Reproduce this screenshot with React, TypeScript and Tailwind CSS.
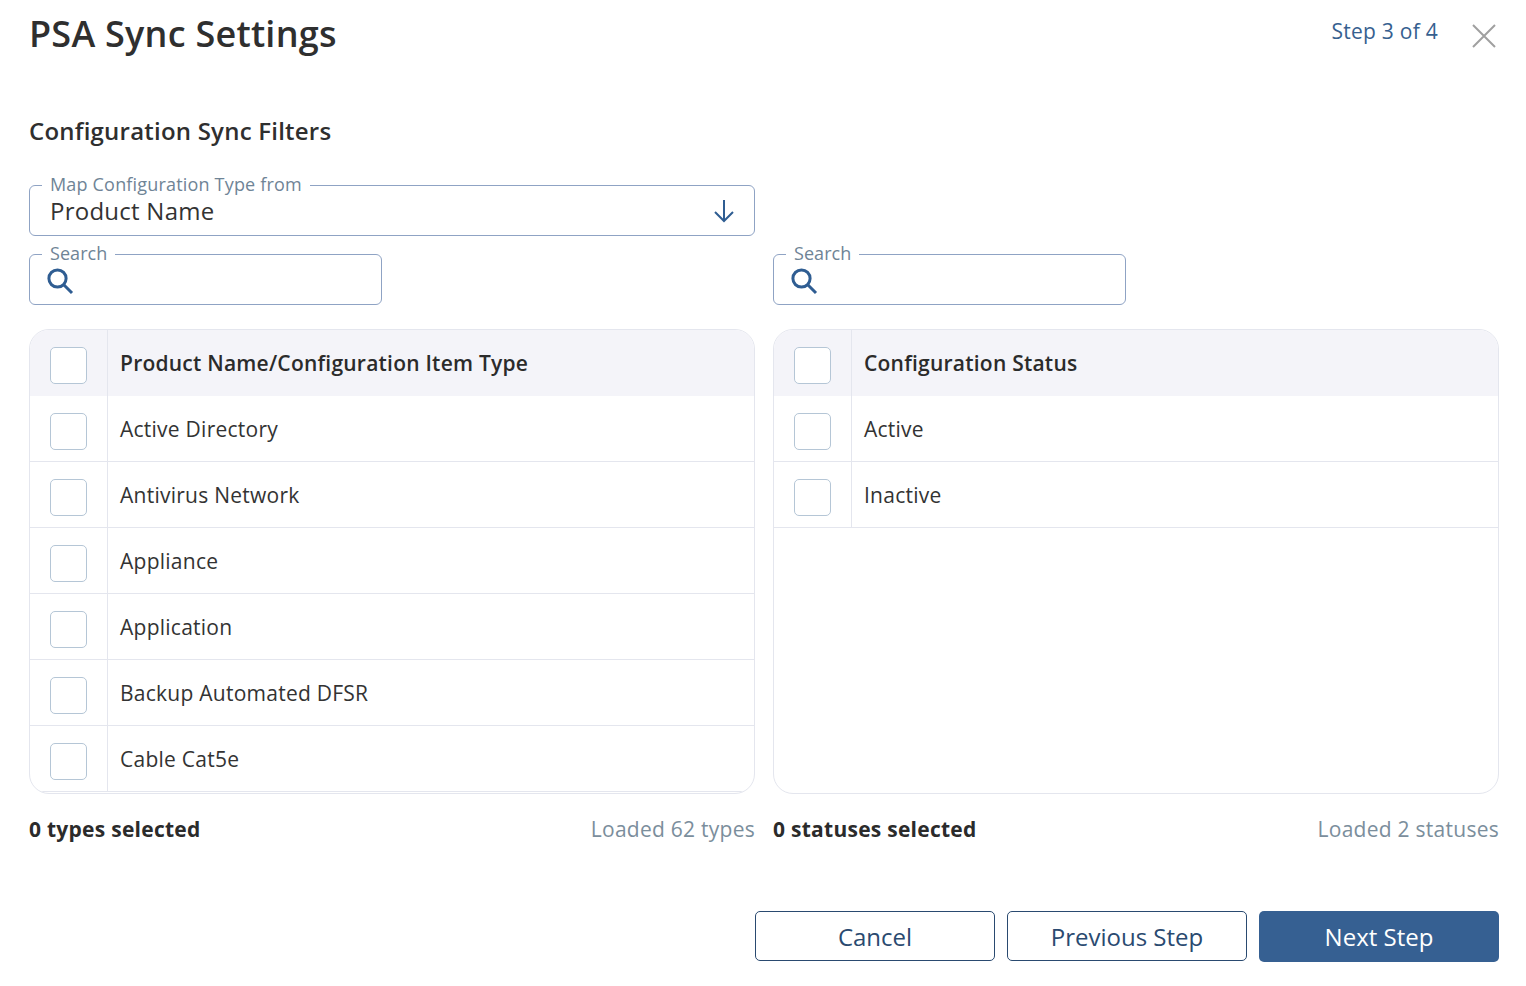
const font = "font-['Open_Sans',sans-serif]";

const types = [
  "Active Directory",
  "Antivirus Network",
  "Appliance",
  "Application",
  "Backup Automated DFSR",
  "Cable Cat5e",
];
const statuses = ["Active", "Inactive"];

function SearchIcon() {
  return (
    <svg width="28" height="28" viewBox="0 0 28 28" fill="none" stroke="#2f5d92" className="shrink-0">
      <circle cx="11.5" cy="11.5" r="8.6" strokeWidth="3" />
      <path d="M17.5 17.5 L26 26" strokeWidth="3" />
    </svg>
  );
}

function SearchBox() {
  return (
    <fieldset className="h-[63px] w-[353px] rounded-[6px] border border-[#8fa3c4] pl-[12px]">
      <legend className="h-[24px] px-2 text-[18px] leading-[22px] tracking-[0.05px] text-[#6f8496]">Search</legend>
      <div className="mt-[1px] ml-[4px]">
        <SearchIcon />
      </div>
    </fieldset>
  );
}

function Checkbox() {
  return <div className="h-[37px] w-[37px] rounded-[5px] border border-[#b5c6d6] bg-white" />;
}

function Row({ label, header }: { label: string; header?: boolean }) {
  return (
    <div
      className={
        header
          ? "flex h-[66px] shrink-0 bg-[#f4f4f9]"
          : "flex h-[66px] shrink-0 border-b border-[#e4e6ee]"
      }
    >
      <div
        className={
          header
            ? "flex w-[78px] shrink-0 items-center border-r border-[#e4e6ee] pt-[4px] pl-[20px]"
            : "flex w-[78px] shrink-0 items-center border-r border-[#e4e6ee] pt-[6px] pl-[20px]"
        }
      >
        <Checkbox />
      </div>
      <div
        className={
          header
            ? "flex items-center pt-[2px] pl-[12px] text-[21px] font-semibold tracking-[0.23px] text-[#2b2b2b]"
            : "flex items-center pt-[2px] pl-[12px] text-[21px] tracking-[0.25px] text-[#333]"
        }
      >
        {label}
      </div>
    </div>
  );
}

function ListPanel({
  title,
  items,
  selected,
  loaded,
}: {
  title: string;
  items: string[];
  selected: string;
  loaded: string;
}) {
  return (
    <div>
      <div className="flex h-[465px] flex-col overflow-hidden rounded-[20px] border border-[#e4e6ee]">
        <Row label={title} header />
        {items.map((item) => (
          <Row key={item} label={item} />
        ))}
      </div>
      <div className="mt-[21px] flex items-center justify-between text-[21px] leading-[28px] tracking-[0.26px]">
        <span className="font-bold text-[#2b2b2b]">{selected}</span>
        <span className="text-[#7b8e9c]">{loaded}</span>
      </div>
    </div>
  );
}

export default function App() {
  return (
    <div className={`${font} h-[986px] w-[1526px] overflow-hidden bg-white pl-[29px] pr-[27px]`}>
      <div className="flex items-start justify-between">
        <h1 className="mt-[9px] text-[36px] leading-[49px] font-semibold tracking-[0.24px] text-[#2f2f2f]">PSA Sync Settings</h1>
        <div className="flex items-center">
          <span className="mt-[13px] text-[21px] leading-[29px] tracking-[0.26px] text-[#36608f]">Step 3 of 4</span>
          <svg width="26" height="26" viewBox="0 0 26 26" stroke="#a0a0a0" strokeWidth="2" fill="none" className="ml-[33px] mt-[23px] mr-[2px]">
            <path d="M2 2 L24 24 M24 2 L2 24" />
          </svg>
        </div>
      </div>

      <h2 className="mt-[56px] text-[24px] leading-[33px] font-semibold tracking-[0.22px] text-[#2f2f2f]">Configuration Sync Filters</h2>

      <fieldset className="mt-[26px] h-[63px] w-[726px] rounded-[6px] border border-[#8fa3c4] pl-[12px] pr-[19px]">
        <legend className="h-[24px] px-2 text-[18px] leading-[22px] tracking-[0.18px] text-[#6f8496]">Map Configuration Type from</legend>
        <div className="-mt-[3px] flex items-center justify-between pl-[8px]">
          <span className="text-[24px] leading-[33px] tracking-[0.25px] text-[#333]">Product Name</span>
          <svg width="22" height="24" viewBox="0 0 22 24" fill="none" stroke="#2f5d92" strokeWidth="2">
            <path d="M11 1 V22 M2 13 L11 22 L20 13" />
          </svg>
        </div>
      </fieldset>

      <div className="mt-[6px] grid grid-cols-[726px_726px] gap-x-[18px]">
        <SearchBox />
        <SearchBox />
      </div>

      <div className="mt-[24px] grid grid-cols-[726px_726px] gap-x-[18px]">
        <ListPanel title="Product Name/Configuration Item Type" items={types} selected="0 types selected" loaded="Loaded 62 types" />
        <ListPanel title="Configuration Status" items={statuses} selected="0 statuses selected" loaded="Loaded 2 statuses" />
      </div>

      <div className="mt-[68px] flex justify-end gap-[12px] text-[24px]">
        <button className="h-[50px] w-[240px] rounded-[5px] border border-[#2a4a70] bg-white pt-[2px] text-[#2a4a70]">Cancel</button>
        <button className="h-[50px] w-[240px] rounded-[5px] border border-[#2a4a70] bg-white pt-[2px] text-[#2a4a70]">Previous Step</button>
        <button className="h-[51px] w-[240px] rounded-[5px] bg-[#366092] text-white">Next Step</button>
      </div>
    </div>
  );
}
